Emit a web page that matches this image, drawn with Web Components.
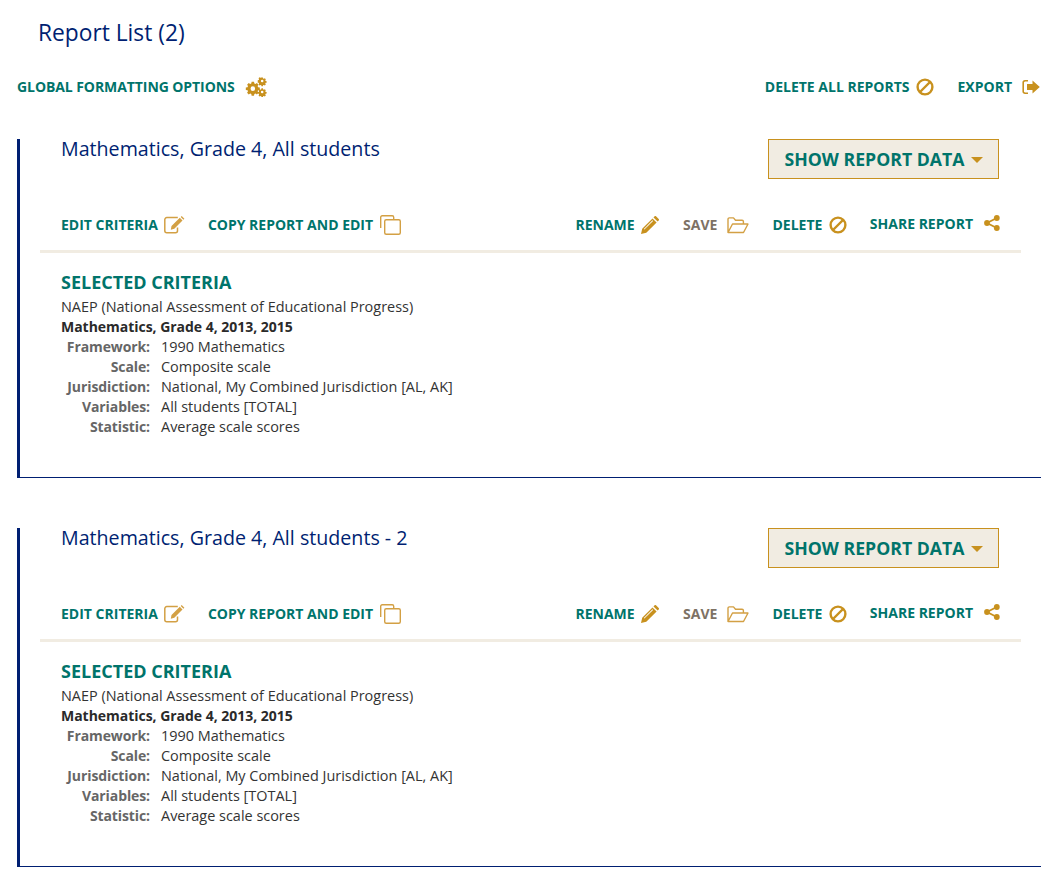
<!DOCTYPE html>
<html>
<head>
<meta charset="utf-8">
<title>Report List</title>
<style>
  html, body { margin: 0; background: #fff; }
  body { font-family: "Open Sans", sans-serif; width: 1041px; }
</style>
</head>
<body>
<report-page></report-page>

<script>
const GOLD = '#c8911e';
const icons = {
  cogs: `<svg width="22" height="20" viewBox="0 0 24 22"><g fill="${GOLD}"><path fill-rule="evenodd" d="M7.2 5.2h2.6l.4 1.9 1.2.5 1.6-1 1.8 1.8-1 1.6.5 1.2 1.9.4v2.6l-1.9.4-.5 1.2 1 1.6-1.8 1.8-1.6-1-1.2.5-.4 1.9H7.2l-.4-1.9-1.2-.5-1.6 1-1.8-1.8 1-1.6-.5-1.2-1.9-.4V11.600l1.900-.4.500-1.200-1-1.600 1.800-1.800 1.600 1 1.200-.5zM8.500 10.300a2.500 2.500 0 1 0 0 5 2.500 2.500 0 0 0 0-5z"/><path fill-rule="evenodd" d="M18 .5h1.600l.2 1.100.9.400 1-.6 1.100 1.100-.6 1 .4.900 1.100.2v1.600l-1.100.2-.4.900.6 1-1.100 1.100-1-.6-.9.400-.2 1.100H18l-.2-1.100-.9-.4-1 .6-1.100-1.100.6-1-.4-.9-1.100-.2V3.500l1.100-.2.400-.9-.6-1L15.800.3l1 .6.900-.4zM18.800 3a1.300 1.300 0 1 0 0 2.800 1.300 1.300 0 0 0 0-2.800z"/><path fill-rule="evenodd" d="M18 12.500h1.600l.2 1.100.9.400 1-.6 1.100 1.100-.6 1 .4.900 1.100.2v1.600l-1.100.2-.4.900.6 1-1.100 1.100-1-.6-.9.400-.2 1.100H18l-.2-1.100-.9-.4-1 .6-1.100-1.100.6-1-.4-.9-1.100-.2v-1.600l1.100-.2.400-.9-.6-1 1.100-1.100 1 .6.900-.4zM18.800 15a1.300 1.300 0 1 0 0 2.800 1.300 1.300 0 0 0 0-2.800z"/></g></svg>`,
  ban: `<svg width="18" height="18" viewBox="0 0 18 18"><circle cx="9" cy="9" r="7.400" fill="none" stroke="${GOLD}" stroke-width="2.400"/><path d="M4 14 14 4" stroke="${GOLD}" stroke-width="2.400"/></svg>`,
  exit: `<svg width="18" height="16" viewBox="0 0 18 16"><path fill="none" stroke="${GOLD}" stroke-width="1.600" d="M6 1.800H3A1.800 1.800 0 0 0 1.200 3.600v8.800A1.800 1.800 0 0 0 3 14.200h3"/><path fill="${GOLD}" d="M5 5h5.500V1.500L17.800 8l-7.300 6.500V11H5z"/></svg>`,
  edit: `<svg width="21" height="18" viewBox="0 0 21 18"><path fill="none" stroke="#d3a044" stroke-width="1.500" d="M13.500 11.500v3.300a2 2 0 0 1-2 2H2.800a2 2 0 0 1-2-2V3.600a2 2 0 0 1 2-2h11"/><path fill="#d3a044" d="M6.800 13.700 7.500 10 15.800 1.800 18.500 4.500 10.300 12.800zM16.700 1l1-1 2.700 2.700-1 1z"/></svg>`,
  copy: `<svg width="21" height="20" viewBox="0 0 21 20"><path fill="none" stroke="#d3a044" stroke-width="1.400" d="M.7 13V2.200A1.500 1.500 0 0 1 2.200.7h10a1.500 1.500 0 0 1 1.500 1.500V4"/><rect x="4.700" y="4.700" width="15.600" height="14.600" rx="1.500" fill="none" stroke="#d3a044" stroke-width="1.400"/></svg>`,
  pencil: `<svg width="18" height="18" viewBox="0 0 18 18"><path fill="${GOLD}" d="M0 18 1.200 12.700 11.500 2.400 15.600 6.500 5.300 16.800zM12.500 1.400 13.600.3a1 1 0 0 1 1.400 0L17.700 3a1 1 0 0 1 0 1.400L16.600 5.500z"/><path fill="#fff" d="M2.800 13 11.500 4.300l.6.600L3.400 13.600z"/></svg>`,
  folder: `<svg width="22" height="17" viewBox="0 0 22 17"><path fill="none" stroke="#d3a044" stroke-width="1.400" stroke-linejoin="round" d="M1 15.500V2.200A1.300 1.300 0 0 1 2.300.9h4.200l2 2.300h6.600a1.300 1.300 0 0 1 1.300 1.300v2M1 15.500h15.500L21 7H5.500z"/></svg>`,
  share: `<svg width="16" height="16" viewBox="0 0 16 16" style="margin-top:-3px"><g fill="${GOLD}"><circle cx="12.800" cy="3" r="2.900"/><circle cx="3" cy="8" r="2.900"/><circle cx="12.800" cy="13" r="2.900"/></g><path fill="none" stroke="${GOLD}" stroke-width="1.800" d="M12.800 3 3 8l9.800 5"/></svg>`
};

class ActionLink extends HTMLElement {
  connectedCallback() {
    if (this.shadowRoot) return;
    let shadow = this.attachShadow({mode: 'open'});
    let gap = this.getAttribute('gap') || '6.5';
    shadow.innerHTML = `
      <style>
        :host { display: inline-flex; align-items: center; height: 20px; gap: ${gap}px;
          font: 700 14px/20px "Open Sans", sans-serif; color: #00746b; white-space: nowrap; }
        :host([muted]) { color: #7d7265; }
        svg { display: block; flex: none; }
      </style>
      <slot></slot>${icons[this.getAttribute('icon')]}`;
  }
}

class ToolBar extends HTMLElement {
  constructor() {
    super();
    this.attachShadow({mode: 'open'}).innerHTML = `
      <style>
        :host { display: flex; align-items: center; justify-content: space-between; }
        .side { display: flex; align-items: center; }
      </style>
      <div class="side"><slot name="left"></slot></div>
      <div class="side"><slot name="right"></slot></div>`;
  }
}

class ShowButton extends HTMLElement {
  constructor() {
    super();
    this.attachShadow({mode: 'open'}).innerHTML = `
      <style>
        :host { display: flex; align-items: center; justify-content: center; gap: 6px; box-sizing: border-box;
          width: 231px; height: 40px; background: #f1ece2; border: 1px solid ${GOLD};
          font: 700 17.700px/24px "Open Sans", sans-serif; color: #00746b; white-space: nowrap; }
        i { width: 0; height: 0; border: 6.500px solid transparent; border-top-color: ${GOLD}; border-bottom: 0; margin-top: 2px; }
      </style>
      <slot></slot><i></i>`;
  }
}

class CriteriaList extends HTMLElement {
  constructor() {
    super();
    let rows = [['Framework', '1990 Mathematics'], ['Scale', 'Composite scale'],
      ['Jurisdiction', 'National, My Combined Jurisdiction [AL, AK]'],
      ['Variables', 'All students [TOTAL]'], ['Statistic', 'Average scale scores']];
    this.attachShadow({mode: 'open'}).innerHTML = `
      <style>
        :host { display: block; font: 14.450px/20px "Open Sans", sans-serif; color: #333; }
        h3 { margin: 0 0 3px; font: 700 18px/24px "Open Sans", sans-serif; color: #00746b; }
        .bold { font-weight: 700; font-size: 14px; color: #2a2a2a; letter-spacing: -.03px; }
        dl { margin: 0; display: grid; grid-template-columns: 89px 1fr; column-gap: 11px; }
        dt { font-weight: 700; font-size: 14px; color: #666; text-align: right; letter-spacing: -.1px; }
        dd { margin: 0; }
      </style>
      <h3>SELECTED CRITERIA</h3>
      <div>NAEP (National Assessment of Educational Progress)</div>
      <div class="bold">Mathematics, Grade 4, 2013, 2015</div>
      <dl>${rows.map(r => `<dt>${r[0]}:</dt><dd>${r[1]}</dd>`).join('')}</dl>`;
  }
}

class ReportCard extends HTMLElement {
  constructor() {
    super();
    this.attachShadow({mode: 'open'}).innerHTML = `
      <style>
        :host { display: block; box-sizing: border-box; height: 339px; margin-left: 17px;
          border-left: 3px solid #001f72; border-bottom: 1px solid #001f72; }
        .head { display: flex; justify-content: space-between; padding: 0 42px 0 41px; }
        h2 { margin: 0; font: 400 19.650px/20px "Open Sans", sans-serif; color: #001f72; }
        .actions { margin: 36px 20px 0; padding: 0 21px 15px 21px; border-bottom: 3px solid #f1ece2; }
        .criteria { padding: 17px 41px 0; }
        .left { margin-right: 22.500px; }
        .r { margin-right: 24px; }
        .r2 { margin-right: 23px; }
      </style>
      <div class="head"><h2><slot></slot></h2><show-button>SHOW REPORT DATA</show-button></div>
      <div class="actions">
        <tool-bar>
          <span slot="left" style="display:flex">
            <action-link icon="edit" class="left">EDIT CRITERIA</action-link>
            <action-link icon="copy" class="left">COPY REPORT AND EDIT</action-link>
          </span>
          <span slot="right" style="display:flex">
            <action-link icon="pencil" class="r">RENAME</action-link>
            <action-link icon="folder" muted gap="10" class="r2">SAVE</action-link>
            <action-link icon="ban" class="r2">DELETE</action-link>
            <action-link icon="share" gap="11" style="margin-top:-1px">SHARE REPORT</action-link>
          </span>
        </tool-bar>
      </div>
      <div class="criteria"><criteria-list></criteria-list></div>`;
  }
}

class ReportPage extends HTMLElement {
  constructor() {
    super();
    this.attachShadow({mode: 'open'}).innerHTML = `
      <style>
        :host { display: block; padding-top: 18px; }
        h1 { margin: 0 0 0 38px; font: 400 22.750px/30px "Open Sans", sans-serif; color: #001f72; }
        tool-bar { margin: 29px 1px 0 17px; }
        report-card { margin-bottom: 50px; }
        .cards { margin-top: 42px; }
        .del { margin-right: 23.500px; }
        .glob { letter-spacing: -.08px; }
      </style>
      <h1>Report List (2)</h1>
      <tool-bar>
        <action-link slot="left" icon="cogs" gap="10" class="glob">GLOBAL FORMATTING OPTIONS</action-link>
        <action-link slot="right" icon="ban" class="del">DELETE ALL REPORTS</action-link>
        <action-link slot="right" icon="exit" gap="10">EXPORT</action-link>
      </tool-bar>
      <div class="cards">
        <report-card>Mathematics, Grade 4, All students</report-card>
        <report-card>Mathematics, Grade 4, All students - 2</report-card>
      </div>`;
  }
}

customElements.define('action-link', ActionLink);
customElements.define('tool-bar', ToolBar);
customElements.define('show-button', ShowButton);
customElements.define('criteria-list', CriteriaList);
customElements.define('report-card', ReportCard);
customElements.define('report-page', ReportPage);
</script>
</body>
</html>
